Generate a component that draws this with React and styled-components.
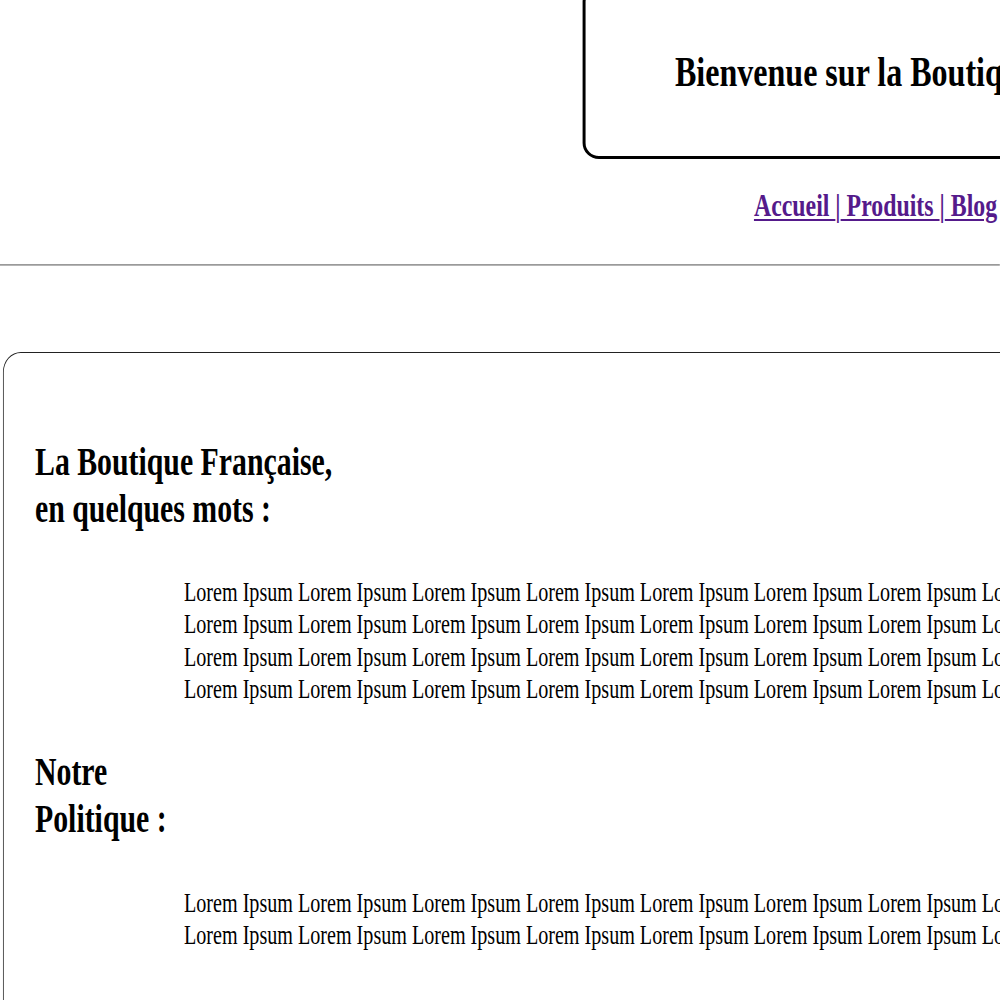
import React from "react";
import styled, { createGlobalStyle } from "styled-components";

const GlobalStyle = createGlobalStyle`
  html, body {
    margin: 0;
    padding: 0;
    overflow: hidden;
    background: #ffffff;
  }
  body {
    font-family: "Liberation Serif", "Times New Roman", serif;
    color: #000000;
  }
`;

// the reference is squeezed horizontally, so the whole page is drawn narrower
const Page = styled.div`
  width: 1342px;
  transform: scaleX(0.745);
  transform-origin: left top;
  display: flex;
  flex-direction: column;
`;

const TitleBox = styled.header`
  margin-top: -14px;
  margin-left: 782px;
  width: 800px;
  padding: 58px 0 60px 120px;
  border: 3px solid #000;
  border-left-width: 4px;
  border-radius: 22px / 16px;
`;

const Title = styled.h1`
  margin: 0;
  font-size: 43px;
  font-weight: bold;
  line-height: 49px;
  white-space: nowrap;
`;

const Nav = styled.nav`
  margin-top: 28px;
  margin-left: 1012px;
  font-size: 32px;
  font-weight: bold;
  line-height: normal;
  color: #551a8b;
  white-space: pre;
`;

const NavLink = styled.a`
  color: #551a8b;
  text-decoration: underline;
  text-decoration-thickness: 2px;
  text-underline-offset: 3px;
`;

const Rule = styled.hr`
  margin: 40px 0 0;
  width: 100%;
  height: 0;
  border: 0;
  border-top: 1px solid #9a9a9a;
  border-bottom: 1px solid #b5b5b5;
`;

const Section = styled.section`
  margin-top: 86px;
  margin-left: 4px;
  width: 2300px;
  padding: 86px 0 120px 42px;
  border: 1px solid #222;
  border-left-width: 1.4px;
  border-radius: 24px / 20px;
  display: flex;
  flex-direction: column;
  gap: 44px;
`;

const Heading = styled.h2`
  margin: 0;
  font-size: 40px;
  font-weight: bold;
  line-height: 46.6px;
`;

const Text = styled.p`
  margin: 0 0 0 200px;
  width: 1850px;
  font-size: 27px;
  line-height: 32.3px;
`;

const lorem = (pairs) => Array(pairs).fill("Lorem Ipsum").join(" ");

function App() {
  return (
    <>
      <GlobalStyle />
      <Page>
        <TitleBox>
          <Title>Bienvenue sur la Boutique Française</Title>
        </TitleBox>
        <Nav>
          <NavLink href="#">{"Accueil "}</NavLink>
          {"|"}
          <NavLink href="#">{" Produits "}</NavLink>
          {"|"}
          <NavLink href="#">{" Blog"}</NavLink>
        </Nav>
        <Rule />
        <Section>
          <Heading>
            La Boutique Française,
            <br />
            en quelques mots :
          </Heading>
          <Text>{lorem(48)}</Text>
          <Heading>
            Notre
            <br />
            Politique :
          </Heading>
          <Text>{lorem(24)}</Text>
        </Section>
      </Page>
    </>
  );
}

export default App;
